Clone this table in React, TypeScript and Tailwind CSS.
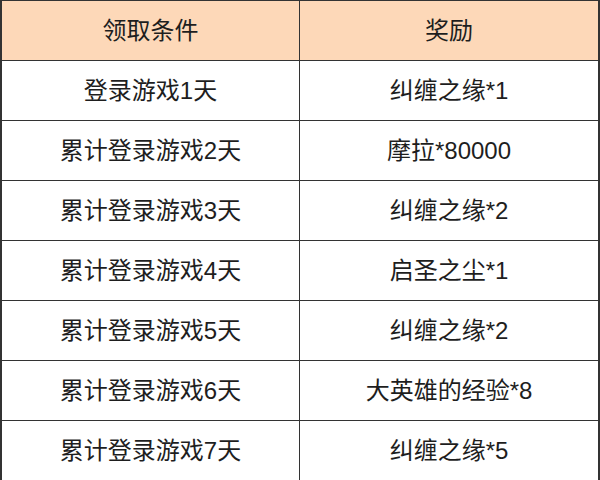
const rows = [
  ["登录游戏1天", "纠缠之缘*1"],
  ["累计登录游戏2天", "摩拉*80000"],
  ["累计登录游戏3天", "纠缠之缘*2"],
  ["累计登录游戏4天", "启圣之尘*1"],
  ["累计登录游戏5天", "纠缠之缘*2"],
  ["累计登录游戏6天", "大英雄的经验*8"],
  ["累计登录游戏7天", "纠缠之缘*5"],
];

export default function App() {
  return (
    <div
      className="w-[600px] h-[480px] bg-white text-[#1e1e1e] text-[24px] border-l-2 border-r-2 border-t border-[#333] overflow-hidden"
      style={{ fontFamily: '"Liberation Sans", "Noto Sans CJK SC", sans-serif' }}
    >
      <div className="grid grid-cols-[298px_1fr] h-[60px] bg-[#fdd8b8] border-b-[1.5px] border-[#333]">
        <div className="flex items-center justify-center border-r-[1.5px] border-[#333]">领取条件</div>
        <div className="flex items-center justify-center">奖励</div>
      </div>
      {rows.map(([cond, reward]) => (
        <div key={cond} className="grid grid-cols-[298px_1fr] h-[60px] border-b-[1.5px] border-[#333]">
          <div className="flex items-center justify-center border-r-[1.5px] border-[#333]">{cond}</div>
          <div className="flex items-center justify-center">{reward}</div>
        </div>
      ))}
    </div>
  );
}
